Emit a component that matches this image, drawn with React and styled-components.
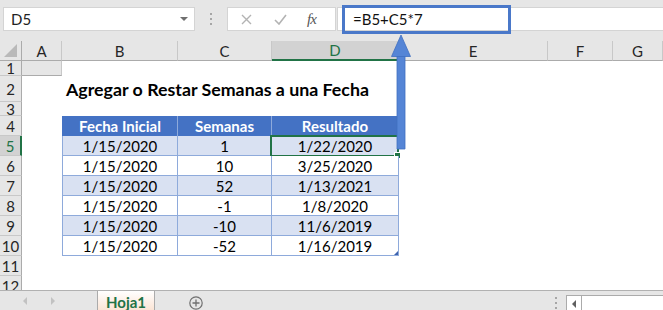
import React from "react";
import styled, { createGlobalStyle, css } from "styled-components";

const GlobalStyle = createGlobalStyle`
  body {
    margin: 0;
    background: #ffffff;
    font-family: Lato, "Liberation Sans", sans-serif;
    overflow: hidden;
  }
`;

/* 색상 */
const GREEN = "#217346";
const BLUE = "#4472c4";
const LINE_BLUE = "#8eaadb";
const BAND = "#d9e1f2";

const Page = styled.div`
  position: relative;
  width: 663px;
  height: 310px;
  display: flex;
  flex-direction: column;
  overflow: hidden;
  background: #ffffff;
`;

/* ---------- 수식 입력줄 ---------- */
const TopBar = styled.div`
  height: 41px;
  flex: none;
  display: flex;
  align-items: flex-start;
  padding: 7px 0 0 3px;
  box-sizing: border-box;
  background: #e6e6e6;
`;

const NameBox = styled.div`
  width: 192px;
  height: 24px;
  box-sizing: border-box;
  display: flex;
  align-items: center;
  justify-content: space-between;
  padding: 0 6px 0 7px;
  background: #ffffff;
  border: 1px solid #d4d4d4;
  font-size: 15px;
  color: #222222;
`;

const Caret = styled.span`
  width: 0;
  height: 0;
  border-left: 4px solid transparent;
  border-right: 4px solid transparent;
  border-top: 4px solid #6f6f6f;
`;

const Grip = styled.div`
  width: 32px;
  height: 24px;
  display: flex;
  flex-direction: column;
  align-items: center;
  justify-content: center;
  gap: 3px;

  & span {
    width: 2px;
    height: 2px;
    background: #a6a6a6;
  }
`;

const FxBox = styled.div`
  width: 109px;
  height: 24px;
  box-sizing: border-box;
  display: flex;
  align-items: center;
  padding-left: 13px;
  gap: 22px;
  background: #ffffff;
  border: 1px solid #d4d4d4;
`;

const FxLabel = styled.span`
  font-family: "Liberation Serif", serif;
  font-style: italic;
  font-size: 15px;
  color: #555555;
  letter-spacing: -1px;
  margin-left: -2px;
`;

const FormulaInput = styled.div`
  flex: 1;
  height: 24px;
  box-sizing: border-box;
  display: flex;
  align-items: center;
  padding-left: 15px;
  margin-left: 1px;
  background: #ffffff;
  border: 1px solid #d4d4d4;
  border-right: 0;
  font-size: 15px;
  color: #111111;
`;

/* ---------- 시트 ---------- */
const Sheet = styled.div`
  height: 249px;
  flex: none;
  display: grid;
  grid-template-columns: 22px 40px 116px 94px 127px 149px 65px 50px;
  grid-template-rows: 20px 15px 26px 14px repeat(9, 20px);
  overflow: hidden;
`;

const headText = css`
  display: flex;
  align-items: center;
  justify-content: center;
  box-sizing: border-box;
  background: #e6e6e6;
  font-size: 15px;
  color: #262626;
`;

const Corner = styled.div`
  ${headText};
  position: relative;
  border-right: 1px solid #ababab;
  border-bottom: 1px solid #ababab;

  &::after {
    content: "";
    position: absolute;
    right: 4px;
    bottom: 3px;
    width: 0;
    height: 0;
    border-left: 13px solid transparent;
    border-bottom: 13px solid #b9b9b9;
  }
`;

const ColHead = styled.div`
  ${headText};
  border-right: 1px solid #c8c8c8;
  border-bottom: 1px solid #ababab;
  ${(p) =>
    p.$active &&
    css`
      background: #d2d2d2;
      color: ${GREEN};
      border-bottom: 2px solid ${GREEN};
    `}
`;

const RowHead = styled.div`
  ${headText};
  grid-column: 1;
  border-right: 1px solid #ababab;
  border-bottom: 1px solid #c8c8c8;
  ${(p) =>
    p.$active &&
    css`
      background: #d2d2d2;
      color: ${GREEN};
      border-right: 2px solid ${GREEN};
    `}
`;

const Title = styled.h1`
  grid-row: 3;
  grid-column: 3 / span 4;
  margin: 0;
  padding: 0 0 2px 4px;
  display: flex;
  align-items: flex-end;
  font-size: 17.8px;
  font-weight: 700;
  color: #000000;
  white-space: nowrap;
`;

/* ---------- 표 ---------- */
const Table = styled.div`
  grid-row: 5 / span 7;
  grid-column: 3 / span 3;
  display: grid;
  grid-template-columns: 116px 94px 127px;
  grid-template-rows: repeat(7, 20px);
  position: relative;

  &::after {
    content: "";
    position: absolute;
    right: 1px;
    bottom: 1px;
    width: 0;
    height: 0;
    border-left: 4px solid transparent;
    border-bottom: 4px solid #3d62ad;
  }
`;

const TableHead = styled.div`
  display: flex;
  align-items: center;
  justify-content: center;
  box-sizing: border-box;
  background: ${BLUE};
  color: #ffffff;
  font-size: 15px;
  font-weight: 700;
  border-right: 1px solid ${LINE_BLUE};
  ${(p) => p.$first && `border-left: 1px solid ${BLUE};`}
`;

const TableCell = styled.div`
  position: relative;
  display: flex;
  align-items: center;
  justify-content: center;
  box-sizing: border-box;
  background: ${(p) => (p.$band ? BAND : "#ffffff")};
  color: #000000;
  font-size: 15px;
  border-right: 1px solid ${LINE_BLUE};
  border-bottom: 1px solid ${LINE_BLUE};
  ${(p) => p.$first && `border-left: 1px solid ${LINE_BLUE};`}
`;

const Selection = styled.div`
  position: absolute;
  left: -2px;
  top: -1px;
  right: -1px;
  bottom: -2px;
  border: 2px solid ${GREEN};
  pointer-events: none;

  &::after {
    content: "";
    position: absolute;
    right: -4px;
    bottom: -4px;
    width: 5px;
    height: 5px;
    background: ${GREEN};
    border: 1px solid #ffffff;
  }
`;

/* ---------- 시트 탭 ---------- */
const TabBar = styled.div`
  flex: 1;
  display: flex;
  align-items: stretch;
  background: #e6e6e6;
  border-top: 1px solid #b1b1b1;
`;

const NavArrows = styled.div`
  width: 97px;
  display: flex;
  align-items: center;
  padding-left: 23px;
  gap: 24px;
  box-sizing: border-box;
`;

const NavArrow = styled.span`
  width: 0;
  height: 0;
  border-top: 4px solid transparent;
  border-bottom: 4px solid transparent;
  ${(p) =>
    p.$right
      ? "border-left: 4px solid #c2c2c2;"
      : "border-right: 4px solid #c2c2c2;"}
`;

const SheetTab = styled.div`
  width: 58px;
  display: flex;
  align-items: center;
  justify-content: center;
  box-sizing: border-box;
  border-left: 1px solid #ababab;
  border-right: 1px solid #ababab;
  background: linear-gradient(#ffffff, #fbe3d3);
  color: ${GREEN};
  font-size: 15px;
  font-weight: 700;
  padding-top: 2px;
`;

const AddSheet = styled.div`
  width: 82px;
  display: flex;
  align-items: center;
  justify-content: center;
  padding-top: 3px;
`;

const Spacer = styled.div`
  flex: 1;
`;

const ScrollGrip = styled.div`
  width: 14px;
  display: flex;
  flex-direction: column;
  align-items: center;
  justify-content: center;
  gap: 3px;
  padding-top: 4px;
  margin-right: 3px;

  & span {
    width: 2px;
    height: 2px;
    background: #a6a6a6;
  }
`;

const ScrollBar = styled.div`
  width: 96px;
  margin-top: 4px;
  display: flex;
  background: #ffffff;
  border: 1px solid #ababab;
  border-right: 0;
  border-bottom: 0;
`;

const ScrollButton = styled.div`
  width: 14px;
  display: flex;
  align-items: center;
  justify-content: center;
  border-right: 1px solid #ababab;

  & span {
    width: 0;
    height: 0;
    border-top: 4px solid transparent;
    border-bottom: 4px solid transparent;
    border-right: 4px solid #606060;
  }
`;

/* ---------- 주석 (화살표) ---------- */
const Highlight = styled.div`
  position: absolute;
  left: 342px;
  top: 5px;
  width: 169px;
  height: 29px;
  box-sizing: border-box;
  border: 3px solid #4a78c9;
  pointer-events: none;
`;

const ArrowSvg = styled.svg`
  position: absolute;
  left: 388px;
  top: 33px;
  overflow: visible;
  pointer-events: none;
`;

const columns = ["A", "B", "C", "D", "E", "F", "G"];

const rows = [
  ["1/15/2020", "1", "1/22/2020"],
  ["1/15/2020", "10", "3/25/2020"],
  ["1/15/2020", "52", "1/13/2021"],
  ["1/15/2020", "-1", "1/8/2020"],
  ["1/15/2020", "-10", "11/6/2019"],
  ["1/15/2020", "-52", "1/16/2019"],
];

export default function App() {
  return (
    <Page>
      <GlobalStyle />
      <TopBar>
        <NameBox>
          D5
          <Caret />
        </NameBox>
        <Grip>
          <span />
          <span />
          <span />
        </Grip>
        <FxBox>
          <svg width="11" height="11" viewBox="0 0 11 11">
            <path d="M1 1 L10 10 M10 1 L1 10" stroke="#b3b3b3" strokeWidth="1.4" />
          </svg>
          <svg width="13" height="11" viewBox="0 0 13 11">
            <path d="M1 6 L5 10 L12 1" stroke="#b3b3b3" strokeWidth="1.6" fill="none" />
          </svg>
          <FxLabel>fx</FxLabel>
        </FxBox>
        <FormulaInput>=B5+C5*7</FormulaInput>
      </TopBar>

      <Sheet>
        <Corner />
        {columns.map((c) => (
          <ColHead key={c} $active={c === "D"}>
            {c}
          </ColHead>
        ))}
        <ColHead />
        {Array.from({ length: 12 }, (_, i) => (
          <RowHead key={i} $active={i === 4} style={{ gridRow: i + 2 }}>
            {i + 1}
          </RowHead>
        ))}
        <Title>Agregar o Restar Semanas a una Fecha</Title>
        <Table>
          <TableHead $first>Fecha Inicial</TableHead>
          <TableHead>Semanas</TableHead>
          <TableHead>Resultado</TableHead>
          {rows.map((r, i) =>
            r.map((v, j) => (
              <TableCell key={`${i}-${j}`} $first={j === 0} $band={i % 2 === 0}>
                {v}
                {i === 0 && j === 2 && <Selection />}
              </TableCell>
            ))
          )}
        </Table>
      </Sheet>

      <TabBar>
        <NavArrows>
          <NavArrow />
          <NavArrow $right />
        </NavArrows>
        <SheetTab>Hoja1</SheetTab>
        <AddSheet>
          <svg width="14" height="14" viewBox="0 0 14 14">
            <circle cx="7" cy="7" r="6.2" fill="none" stroke="#707070" strokeWidth="1.2" />
            <path d="M7 3.5 V10.5 M3.5 7 H10.5" stroke="#707070" strokeWidth="1.3" />
          </svg>
        </AddSheet>
        <Spacer />
        <ScrollGrip>
          <span />
          <span />
          <span />
        </ScrollGrip>
        <ScrollBar>
          <ScrollButton>
            <span />
          </ScrollButton>
        </ScrollBar>
      </TabBar>

      <Highlight />
      <ArrowSvg width="26" height="120" viewBox="0 0 26 120">
        <path
          d="M9 22 H17 V116 H9 Z"
          fill="#5585d6"
          stroke="#3f6fc0"
          strokeWidth="0.8"
        />
        <path d="M3.5 23.5 L13 2 L22.5 23.5 Z" fill="#5585d6" stroke="#3f6fc0" strokeWidth="0.8" />
      </ArrowSvg>
    </Page>
  );
}
